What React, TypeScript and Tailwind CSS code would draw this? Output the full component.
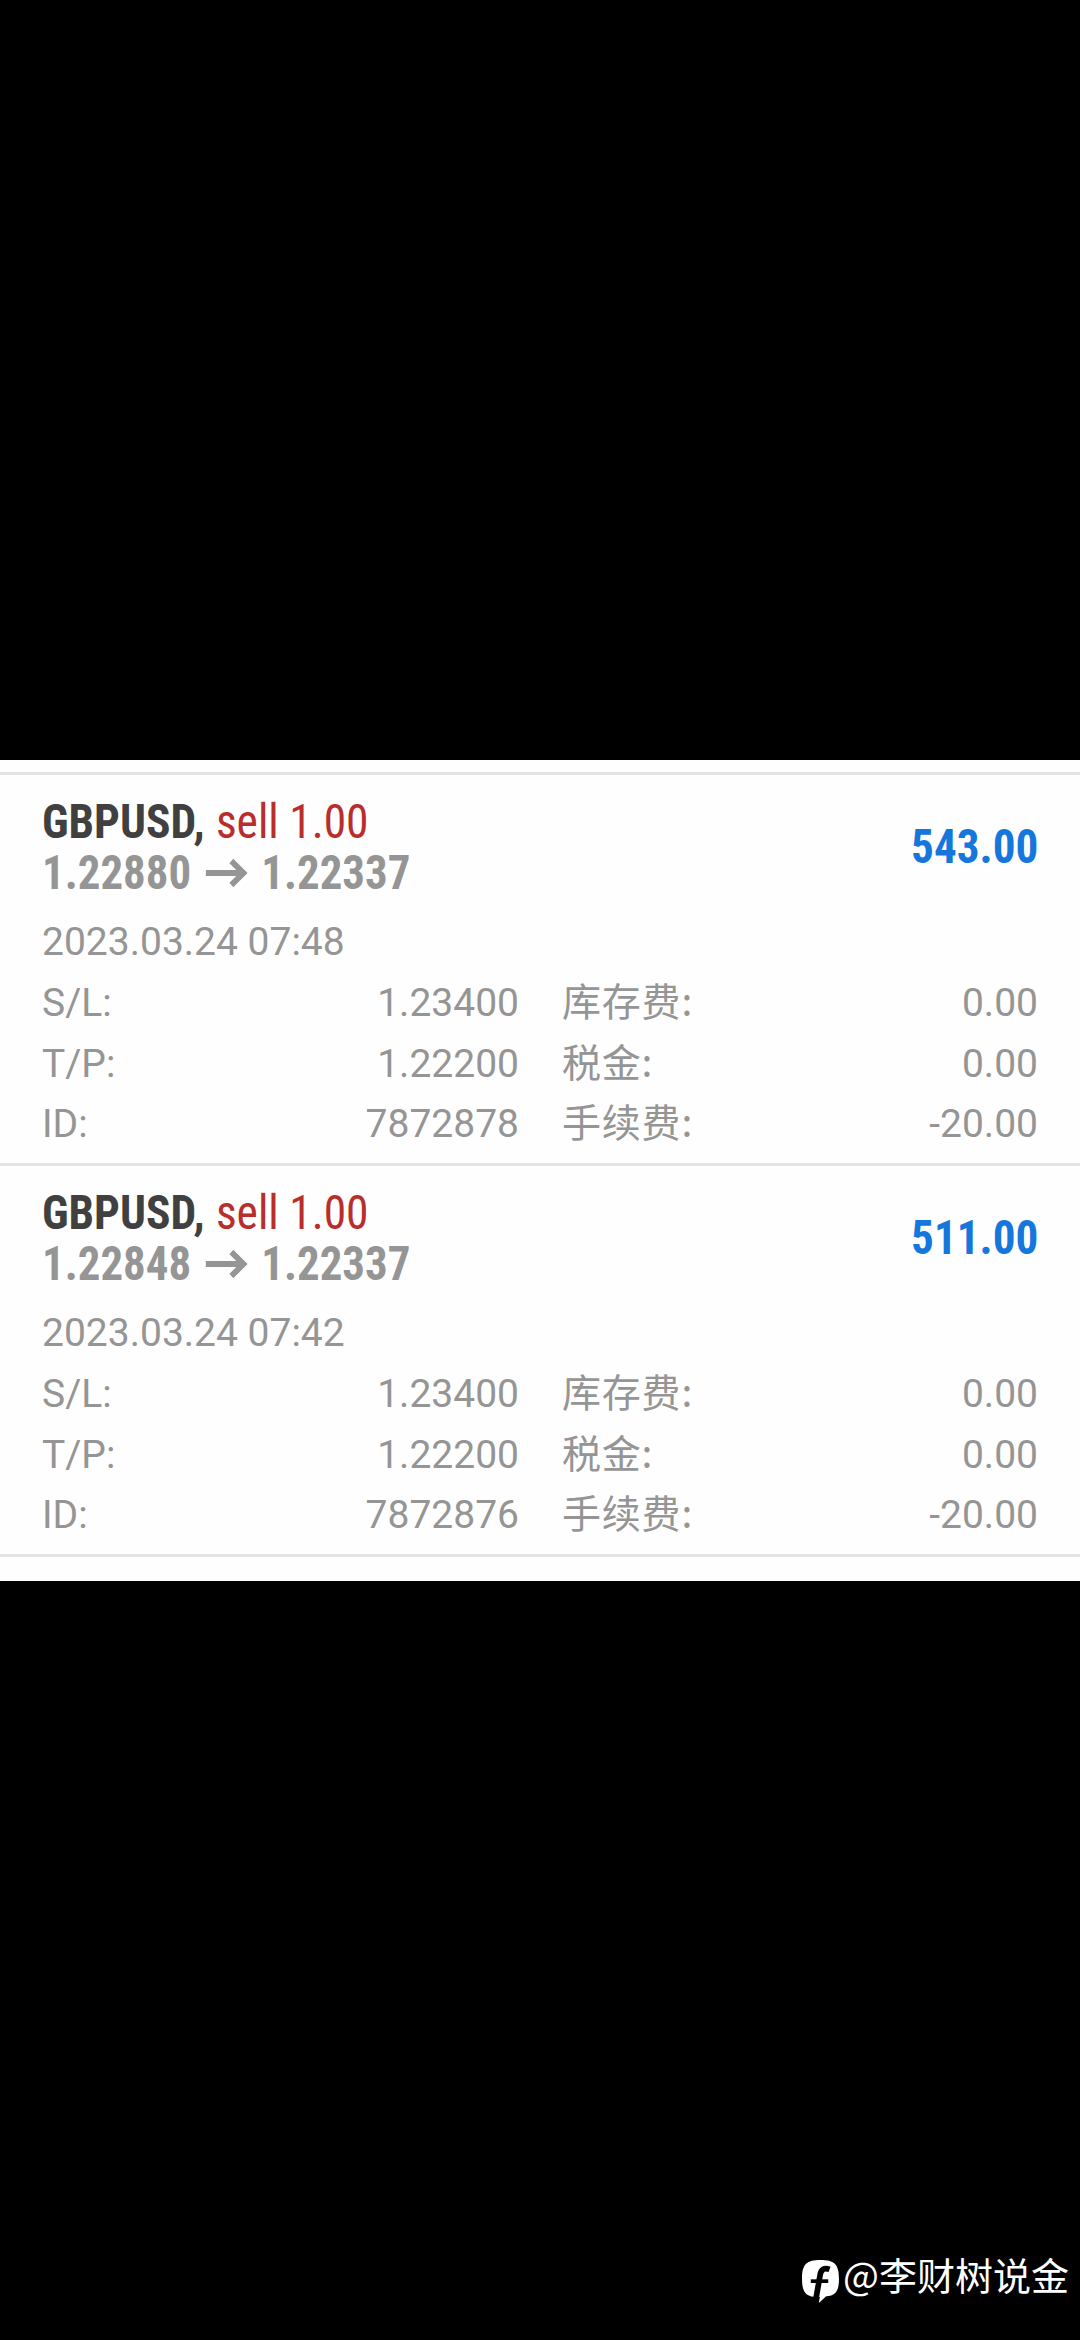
import React from 'react';

interface Deal {
  id: string;
  symbol: string;
  side: string;
  open: string;
  close: string;
  profit: string;
  time: string;
  sl: string;
  tp: string;
  swap: string;
  tax: string;
  fee: string;
}

const deals: Deal[] = [
  {
    id: '7872878',
    symbol: 'GBPUSD,',
    side: 'sell 1.00',
    open: '1.22880',
    close: '1.22337',
    profit: '543.00',
    time: '2023.03.24 07:48',
    sl: '1.23400',
    tp: '1.22200',
    swap: '0.00',
    tax: '0.00',
    fee: '-20.00',
  },
  {
    id: '7872876',
    symbol: 'GBPUSD,',
    side: 'sell 1.00',
    open: '1.22848',
    close: '1.22337',
    profit: '511.00',
    time: '2023.03.24 07:42',
    sl: '1.23400',
    tp: '1.22200',
    swap: '0.00',
    tax: '0.00',
    fee: '-20.00',
  },
];

const Arrow: React.FC = () => (
  <svg className="mr-[15px] ml-[15px] h-[30px] w-[45px]" viewBox="0 0 45 30" fill="none" stroke="#959595" strokeWidth="6">
    <path d="M0 15H40M27.500 3L40.500 15L27.500 27" />
  </svg>
);

const DealCard: React.FC<{ deal: Deal }> = ({ deal }) => {
  const rows = [
    ['S/L:', deal.sl, '库存费:', deal.swap],
    ['T/P:', deal.tp, '税金:', deal.tax],
    ['ID:', deal.id, '手续费:', deal.fee],
  ];

  return (
    <article className="h-[391px] border-b-3 border-[#e4e4e4] px-[42px] pt-[21px]">
      {/* Header */}
      <div className="flex h-[102px] items-center justify-between font-['Roboto_Condensed','Roboto',sans-serif] text-[48px]">
        <div>
          <div className="flex h-[51px] origin-left scale-x-[0.947] items-center gap-[12px] leading-none">
            <span className="font-bold text-[#404040]">{deal.symbol}</span>
            <span className="text-[#b92d2d]">{deal.side}</span>
          </div>
          <div className="flex h-[51px] origin-left scale-x-[0.935] items-center leading-none font-bold text-[#959595]">
            <span>{deal.open}</span>
            <Arrow />
            <span>{deal.close}</span>
          </div>
        </div>
        <div className="origin-right scale-x-[0.94] leading-none font-bold text-[#1577dc]">{deal.profit}</div>
      </div>

      {/* Details */}
      <div className="pt-[14px] text-[39px] leading-[60px] text-[#959595]">
        <div className="mb-px">{deal.time}</div>
        {rows.map(([label, value, label2, value2]) => (
          <div key={label} className="grid h-[60px] grid-cols-2 gap-x-[42px] nth-2:mb-px">
            <div className="flex justify-between">
              <span>{label}</span>
              <span>{value}</span>
            </div>
            <div className="flex justify-between">
              <span className="pl-px font-['Noto_Sans_CJK_SC',sans-serif] leading-[52px] tracking-[0.8px]">{label2}</span>
              <span>{value2}</span>
            </div>
          </div>
        ))}
      </div>
    </article>
  );
};

const Watermark: React.FC = () => (
  <div className="flex h-[56px] items-start text-white">
    <svg className="mt-[10px] mr-[4px] h-[43px] w-[37px]" viewBox="0 0 110 128">
      <path
        d="M55 0C96 0 110 12 110 56C110 90 102 106 72 108L50 128L53 110C12 112 0 98 0 56C0 12 14 0 55 0Z"
        fill="#fff"
      />
      <path d="M82 28C66 22 57 28 54 44L41 118" fill="none" stroke="#000" strokeWidth="17" />
      <path d="M26 63H78" fill="none" stroke="#000" strokeWidth="11" />
    </svg>
    <span className="font-['Noto_Sans_CJK_SC',sans-serif] text-[38px] leading-[48px]">@李财树说金</span>
  </div>
);

const App: React.FC = () => {
  return (
    <div className="flex h-[2340px] w-[1080px] flex-col bg-black pt-[760px] font-['Roboto','Noto_Sans_CJK_SC',sans-serif]">
      <main className="h-[821px] bg-[#fefefe] pt-[12px]">
        <div className="h-[3px] bg-[#e4e4e4]" />
        {deals.map(deal => (
          <DealCard key={deal.id} deal={deal} />
        ))}
      </main>
      <footer className="mt-auto flex justify-end pr-[11px] pb-[34px]">
        <Watermark />
      </footer>
    </div>
  );
};

export default App;
